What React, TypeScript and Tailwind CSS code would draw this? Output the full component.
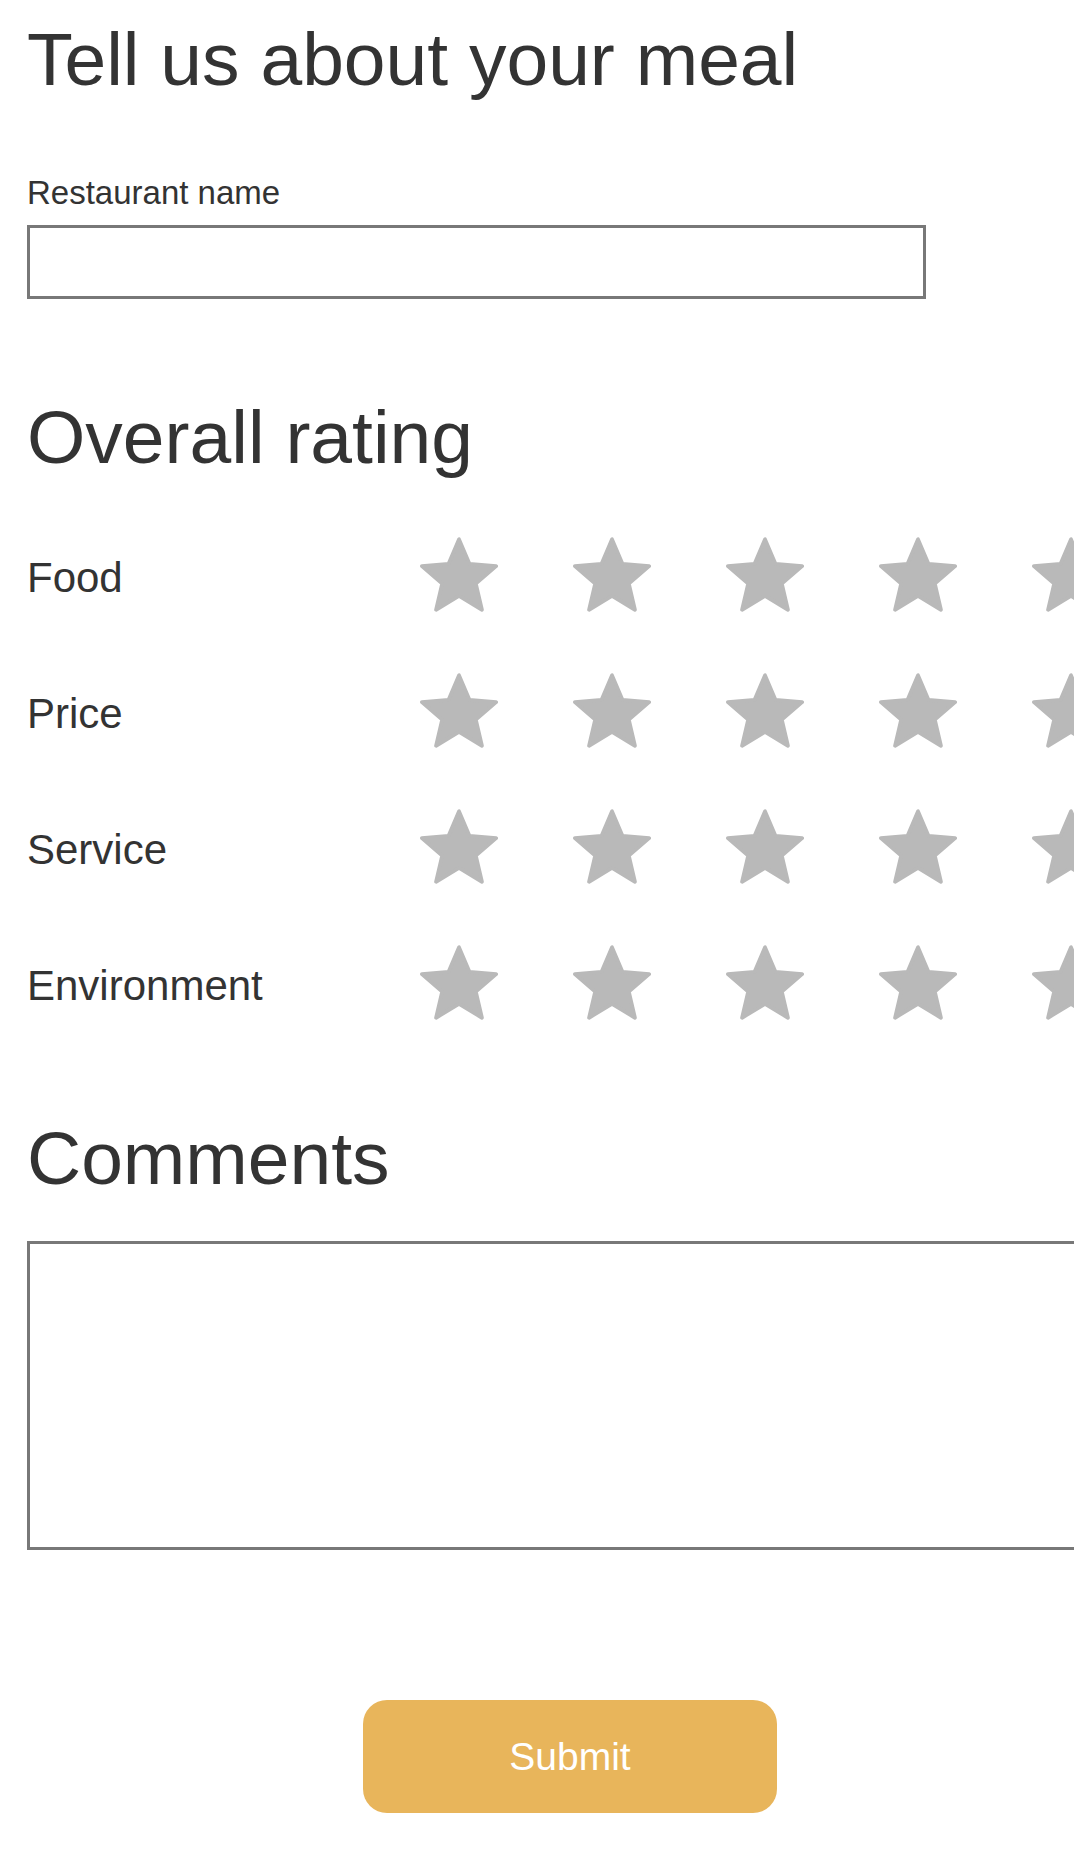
import React from "react";

function Star() {
  return (
    <svg width="78" height="75" viewBox="1.5 1.5 21 20" className="block shrink-0">
      <path
        d="M12 17.27L18.18 21l-1.64-7.03L22 9.24l-7.19-.61L12 2 9.19 8.63 2 9.24l5.46 4.73L5.82 21z"
        fill="#b9b9b9"
        stroke="#b9b9b9"
        strokeWidth="1"
        strokeLinejoin="round"
      />
    </svg>
  );
}

const rows = ["Food", "Price", "Service", "Environment"];

export default function App() {
  return (
    <div className="w-full min-h-[1859px] overflow-hidden bg-white font-['Liberation_Sans',Arial,sans-serif] text-[#333]">
      <div className="w-[1113px] pl-[27px] pt-[22px]">
        <h1 className="text-[75px] leading-none font-normal">Tell us about your meal</h1>

        <label className="mt-[79px] block text-[33px] leading-none">Restaurant name</label>
        <input
          type="text"
          className="mt-[16px] block h-[74px] w-[899px] border-[3px] border-[#787878] bg-white outline-none"
        />

        <h2 className="mt-[101px] text-[75px] leading-none font-normal">Overall rating</h2>

        <div className="mt-[61px] flex flex-col gap-[60px]">
          {rows.map((r) => (
            <div key={r} className="flex h-[76px] items-center">
              <div className="w-[393px] shrink-0 pt-[7px] text-[42px] leading-none">{r}</div>
              <div className="flex gap-[75px]">
                <Star />
                <Star />
                <Star />
                <Star />
                <Star />
              </div>
            </div>
          ))}
        </div>

        <h2 className="mt-[101px] text-[75px] leading-none font-normal">Comments</h2>

        <textarea className="mt-[45px] block h-[309px] w-[1086px] resize-none border-[3px] border-[#787878] bg-white outline-none" />

        <div className="mt-[150px] flex justify-center">
          <button className="h-[113px] w-[414px] rounded-[24px] bg-[#e8b55b] text-[39px] leading-none text-white">
            Submit
          </button>
        </div>
      </div>
    </div>
  );
}
